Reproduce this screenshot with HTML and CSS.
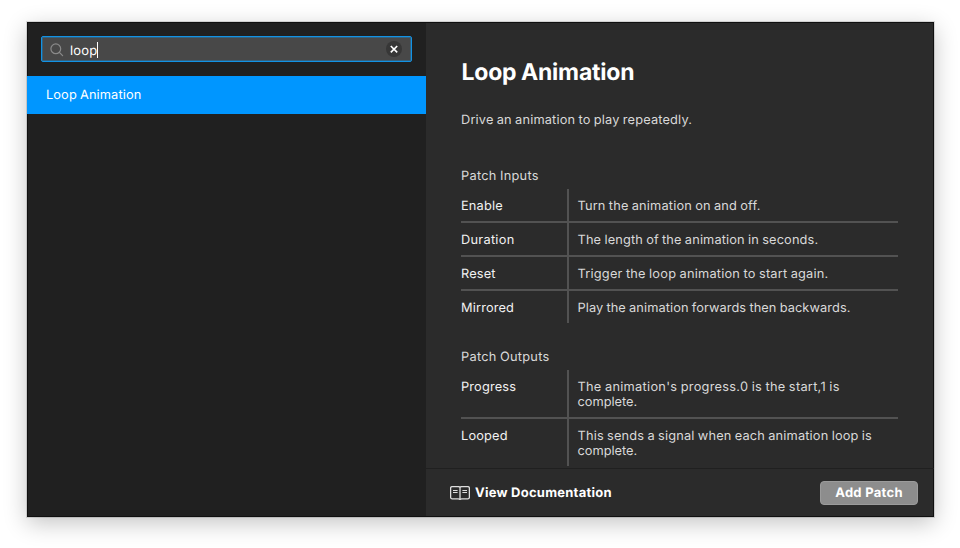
FILE: index.html
```html
<!DOCTYPE html>
<html lang="en">
<head>
<meta charset="utf-8">
<title>Patch Library</title>
<link rel="stylesheet" href="styles.css">
</head>
<body>
<main class="window">
  <aside class="sidebar">
    <div class="search">
      <svg class="search-icon" width="14" height="14" viewBox="0 0 14 14" fill="none" stroke="#8a8a8a" stroke-width="1.2" stroke-linecap="round"><circle cx="5.8" cy="5.8" r="4.9"/><path d="M9.4 9.4 12.6 12.6"/></svg>
      <span class="query">loop</span><span class="caret"></span>
      <span class="clear"><svg width="16" height="16" viewBox="0 0 16 16" fill="none" stroke="#fff" stroke-width="1.6"><path d="M4.8 5 11.2 11.4M11.2 5 4.8 11.4"/></svg></span>
    </div>
    <div class="result">Loop Animation</div>
  </aside>
  <section class="detail">
    <div class="content">
      <h1>Loop Animation</h1>
      <p class="summary">Drive an animation to play repeatedly.</p>
      <h2>Patch Inputs</h2>
      <dl class="ports">
        <div class="port"><dt>Enable</dt><dd>Turn the animation on and off.</dd></div>
        <div class="port"><dt class="loose">Duration</dt><dd class="snug">The length of the animation in seconds.</dd></div>
        <div class="port"><dt>Reset</dt><dd class="airy">Trigger the loop animation to start again.</dd></div>
        <div class="port"><dt>Mirrored</dt><dd class="tight">Play the animation forwards then backwards.</dd></div>
      </dl>
      <h2 class="outputs">Patch Outputs</h2>
      <dl class="ports">
        <div class="port"><dt>Progress</dt><dd class="loose">The animation's progress.0 is the start,1 is<br><span class="tail">complete.</span></dd></div>
        <div class="port"><dt>Looped</dt><dd>This sends a signal when each animation loop is<br><span class="tail">complete.</span></dd></div>
      </dl>
    </div>
    <footer class="footer">
      <a class="docs"><svg width="20" height="14" viewBox="0 0 20 14" fill="none" stroke="#dedede" stroke-width="1.3"><path d="M10 1.4C9.5.8 9 .6 8.3.6H2.2C1.2.6.6 1.2.6 2.2v9c0 1 .6 1.6 1.6 1.6h6.1c.7 0 1.2.2 1.7.6.5-.4 1-.6 1.7-.6h6.1c1 0 1.6-.6 1.6-1.6v-9c0-1-.6-1.6-1.6-1.6h-6.1c-.7 0-1.2.2-1.7.8zM10 1.4v12"/><path stroke-width="1" d="M3 4.5h4.6M3 6.5h4.6M12.4 4.5H17M12.4 6.5H17"/></svg><span>View Documentation</span></a>
      <button class="add">Add Patch</button>
    </footer>
  </section>
</main>
</body>
</html>
```
FILE: styles.css
```css
* { box-sizing: border-box; margin: 0; padding: 0; }
body {
  width: 960px;
  height: 548px;
  padding: 22px 26px 31px 27px;
  overflow: hidden;
  background: #fff;
  font: 12.8px/15px Inter, sans-serif;
  letter-spacing: 0.155px;
  word-spacing: -0.5px;
  text-rendering: geometricPrecision;
  color: #d9d9d9;
}
.window {
  display: grid;
  grid-template-columns: 399px 1fr;
  width: 907px;
  height: 495px;
  box-shadow: 0 0 0 1px rgba(0,0,0,.12), 0 6px 22px rgba(0,0,0,.24);
}
.sidebar { background: #202020; box-shadow: inset 1px 1px #101010, inset 0 -1px #101010; }
.search {
  display: flex;
  align-items: center;
  height: 26px;
  margin: 14px 14px 0;
  padding: 0 9px 0 8px;
  border: 1px solid #1292e4;
  box-shadow: inset 0 0 0 1px rgba(18,146,228,.35);
  border-radius: 2px;
  background: #484848;
}
.search-icon { margin-top: 1px; }
.query { margin: 3px 0 0 6px; font-size: 13px; line-height: 16px; color: #fff; }
.caret { width: 1px; height: 16px; margin-top: 1px; background: #fff; }
.clear { width: 16px; height: 16px; margin-left: auto; border-radius: 50%; background: #373737; }
.clear svg { display: block; }
.result {
  height: 38px;
  margin-top: 14px;
  padding: 1px 0 0 19px;
  background: #0096ff;
  color: #fff;
  line-height: 38px;
  letter-spacing: 0.1px;
}
.detail {
  display: flex;
  flex-direction: column;
  background: #2b2b2b;
  box-shadow: inset 0 1px #101010, inset -1px -1px #101010;
}
.content { flex: 1; padding: 36px 35px 0; }
h1 { padding-left: 0.5px; font-size: 23px; font-weight: 700; line-height: 28px; letter-spacing: -0.22px; color: #fff; }
.summary { margin-top: 27px; }
h2 { margin-top: 41px; font-size: 12.8px; font-weight: 400; line-height: 15px; letter-spacing: 0.26px; }
.outputs { margin-top: 27px; }
.ports { margin-top: 5px; width: 437px; }
.port { display: grid; grid-template-columns: 106px 1fr; }
.port + .port { border-top: 2px solid #525252; }
.port + .port dd { position: relative; }
.port + .port dd::before { content: ""; position: absolute; left: -2px; top: -2px; width: 2px; height: 2px; background: #525252; }
dt { padding-top: 10px; color: #f2f2f2; }
dd { padding: 10px 0 7px 8.5px; border-left: 2px solid #525252; }
.loose { letter-spacing: 0.27px; }
.airy { letter-spacing: 0.21px; }
.snug { letter-spacing: 0.13px; }
.tight { letter-spacing: 0.08px; }
.tail { letter-spacing: -0.02px; }
.footer {
  display: flex;
  align-items: center;
  justify-content: space-between;
  height: 49px;
  padding: 0 16px 0 24px;
  border-top: 1px solid #202020;
}
.docs { display: flex; align-items: center; gap: 5px; color: #fff; font-size: 13px; font-weight: 650; letter-spacing: 0.24px; word-spacing: 0; }
.add {
  width: 98px;
  height: 24px;
  border: 1px solid #9b9b9b;
  border-radius: 4px;
  background: #8d8d8d;
  color: #fff;
  font: 650 13px/22px Inter, sans-serif;
  letter-spacing: 0.28px;
  text-rendering: geometricPrecision;
}
```
